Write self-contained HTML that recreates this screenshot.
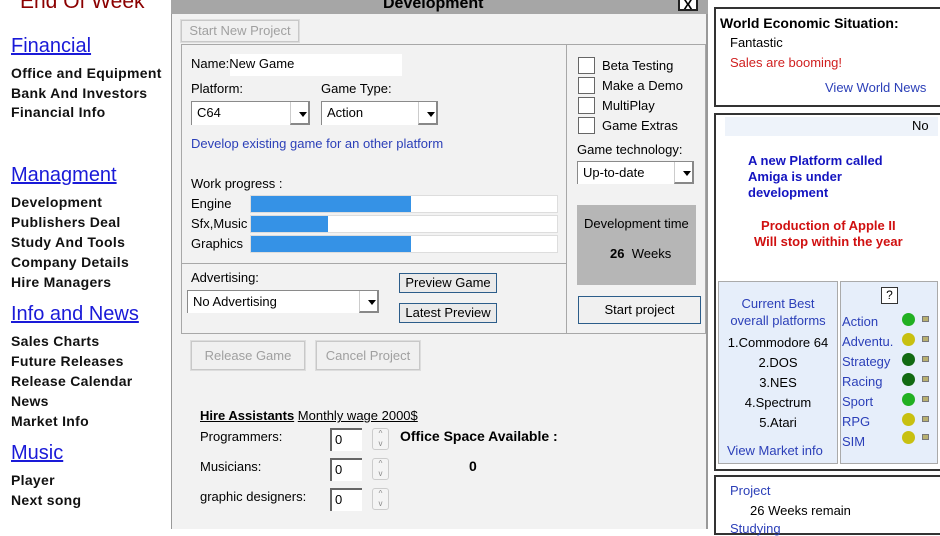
<!DOCTYPE html><html><head><style>
*{margin:0;padding:0;box-sizing:border-box}
body{width:940px;height:529px;overflow:hidden;background:#fff;font-family:"Liberation Sans",Arial,sans-serif;font-size:13px;position:relative;color:#000}
.a{position:absolute;white-space:nowrap}
.nav{font-weight:bold;font-size:14px;letter-spacing:0.3px;color:#111}
.h{color:#1a1ad8;text-decoration:underline;font-size:20px}
.box{position:absolute;border:1px solid #a0a0a0}
.btn{position:absolute;border:1px solid #707070;background:#eaeaea;text-align:center;font-size:13px}
.dis{border:1px solid #c8c8c8;color:#a0a0a0;background:#f0f0f0;box-shadow:0 0 0 1px #ddd}
.sel{position:absolute;background:#fff;border:1px solid #8a8a8a;border-right:none;border-bottom:none;padding:3px 5px;font-size:13px}
.sel:after{content:"";position:absolute;right:3px;top:50%;margin-top:-2px;border:4px solid transparent;border-top:5px solid #000}
.sel i{position:absolute;right:0;top:0;bottom:0;width:20px;border-left:1px solid #ccc;border-bottom:2px solid #888;border-right:2px solid #888}
.bar{position:absolute;left:250px;width:308px;height:18px;background:#fff;border:1px solid #ddd}
.bar b{display:block;height:100%;background:#3592e6}
.cb{position:absolute;left:578px;width:17px;height:17px;border:1px solid #666;background:#fff}
.led{position:absolute;width:13px;height:13px;border-radius:50%}
.sq{position:absolute;width:7px;height:6px;background:#b8b070;border:1px solid #777}
.spin{position:absolute;width:17px;height:22px;border:1px solid #ccc;border-radius:3px;background:#f4f4f4;font-size:8px;text-align:center;color:#888;line-height:10px}
.in{position:absolute;background:#fff;border-left:2px solid #666;border-top:2px solid #666;width:32px;height:23px;padding:2px 3px;font-size:13px}
</style></head><body>
<div class="a" style="left:20px;top:-10px;font-size:21px;color:#8b0000">End Of Week</div>
<div class="a h" style="left:11px;top:35px">Financial</div>
<div class="a nav" style="left:11px;top:65px">Office and Equipment</div>
<div class="a nav" style="left:11px;top:85px">Bank And Investors</div>
<div class="a nav" style="left:11px;top:104px">Financial Info</div>
<div class="a h" style="left:11px;top:164px">Managment</div>
<div class="a nav" style="left:11px;top:194px">Development</div>
<div class="a nav" style="left:11px;top:214px">Publishers Deal</div>
<div class="a nav" style="left:11px;top:234px">Study And Tools</div>
<div class="a nav" style="left:11px;top:254px">Company Details</div>
<div class="a nav" style="left:11px;top:274px">Hire Managers</div>
<div class="a h" style="left:11px;top:303px">Info and News</div>
<div class="a nav" style="left:11px;top:333px">Sales Charts</div>
<div class="a nav" style="left:11px;top:353px">Future Releases</div>
<div class="a nav" style="left:11px;top:373px">Release Calendar</div>
<div class="a nav" style="left:11px;top:393px">News</div>
<div class="a nav" style="left:11px;top:413px">Market Info</div>
<div class="a h" style="left:11px;top:442px">Music</div>
<div class="a nav" style="left:11px;top:472px">Player</div>
<div class="a nav" style="left:11px;top:492px">Next song</div>

<!-- dialog -->
<div class="a" style="left:171px;top:0;width:537px;height:529px;background:#f2f2f2;border-left:1px solid #999;border-right:2px solid #999"></div>
<div class="a" style="left:171px;top:0;width:537px;height:14px;background:#a6a6a6"></div>
<div class="a" style="left:383px;top:-5px;font-weight:bold;font-size:16px">Development</div>
<div class="a" style="left:678px;top:-2px;width:20px;height:13px;border:2px solid #222;background:#fff;font-weight:bold;font-size:13px;text-align:center;line-height:10px">X</div>
<div class="btn dis" style="left:181px;top:20px;width:118px;height:22px;line-height:20px">Start New Project</div>
<div class="box" style="left:181px;top:44px;width:525px;height:290px;border-color:#a8a8a8"></div>
<div class="a" style="left:566px;top:45px;width:1px;height:288px;background:#a8a8a8"></div>
<div class="a" style="left:182px;top:263px;width:384px;height:1px;background:#a8a8a8"></div>
<div class="a" style="left:230px;top:54px;width:172px;height:22px;background:#fff"></div>
<div class="a" style="left:191px;top:56px">Name:New Game</div>
<div class="a" style="left:191px;top:81px">Platform:</div>
<div class="a" style="left:321px;top:81px">Game Type:</div>
<div class="sel" style="left:191px;top:101px;width:119px;height:24px">C64<i></i></div>
<div class="sel" style="left:321px;top:101px;width:117px;height:24px">Action<i></i></div>
<div class="a" style="left:191px;top:136px;color:#2b3fb8">Develop existing game for an other platform</div>
<div class="a" style="left:191px;top:176px">Work progress :</div>
<div class="a" style="left:191px;top:196px">Engine</div>
<div class="a" style="left:191px;top:216px">Sfx,Music</div>
<div class="a" style="left:191px;top:236px">Graphics</div>
<div class="bar" style="top:195px"><b style="width:160px"></b></div>
<div class="bar" style="top:215px"><b style="width:77px"></b></div>
<div class="bar" style="top:235px"><b style="width:160px"></b></div>
<div class="a" style="left:191px;top:270px">Advertising:</div>
<div class="sel" style="left:187px;top:290px;width:192px;height:23px">No Advertising<i></i></div>
<div class="btn" style="left:399px;top:273px;width:98px;height:20px;line-height:18px;border-color:#2c5d8a">Preview Game</div>
<div class="btn" style="left:399px;top:303px;width:98px;height:20px;line-height:18px;border-color:#2c5d8a">Latest Preview</div>
<div class="cb" style="top:57px"></div><div class="a" style="left:602px;top:58px">Beta Testing</div>
<div class="cb" style="top:77px"></div><div class="a" style="left:602px;top:78px">Make a Demo</div>
<div class="cb" style="top:97px"></div><div class="a" style="left:602px;top:98px">MultiPlay</div>
<div class="cb" style="top:117px"></div><div class="a" style="left:602px;top:118px">Game Extras</div>
<div class="a" style="left:577px;top:142px">Game technology:</div>
<div class="sel" style="left:577px;top:161px;width:117px;height:23px">Up-to-date<i></i></div>
<div class="a" style="left:577px;top:205px;width:119px;height:80px;background:#b6b6b6"></div>
<div class="a" style="left:584px;top:216px">Development time</div>
<div class="a" style="left:610px;top:246px"><b>26</b>&nbsp; Weeks</div>
<div class="btn" style="left:578px;top:296px;width:123px;height:28px;line-height:26px;border-color:#2c5d8a;background:#f0f0f0">Start project</div>
<div class="btn dis" style="left:191px;top:341px;width:114px;height:29px;line-height:27px">Release Game</div>
<div class="btn dis" style="left:316px;top:341px;width:104px;height:29px;line-height:27px">Cancel Project</div>
<div class="a" style="left:200px;top:408px"><b style="text-decoration:underline">Hire Assistants</b> <span style="text-decoration:underline">Monthly wage 2000$</span></div>
<div class="a" style="left:200px;top:429px">Programmers:</div>
<div class="a" style="left:200px;top:459px">Musicians:</div>
<div class="a" style="left:200px;top:489px">graphic designers:</div>
<div class="in" style="left:330px;top:428px">0</div><div class="spin" style="left:372px;top:428px">^<br>v</div>
<div class="in" style="left:330px;top:458px">0</div><div class="spin" style="left:372px;top:458px">^<br>v</div>
<div class="in" style="left:330px;top:488px">0</div><div class="spin" style="left:372px;top:488px">^<br>v</div>
<div class="a" style="left:400px;top:428px;font-weight:bold;font-size:14px">Office Space Available :</div>
<div class="a" style="left:469px;top:458px;font-weight:bold;font-size:14px">0</div>

<!-- right -->
<div class="a" style="left:714px;top:7px;width:226px;height:100px;border:2px solid #333;border-right:none"></div>
<div class="a" style="left:720px;top:15px;font-weight:bold;font-size:14px">World Economic Situation:</div>
<div class="a" style="left:730px;top:35px">Fantastic</div>
<div class="a" style="left:730px;top:55px;color:#d02020">Sales are booming!</div>
<div class="a" style="left:825px;top:80px;color:#2b3fb8">View World News</div>
<div class="a" style="left:714px;top:113px;width:226px;height:358px;border:2px solid #333;border-right:none"></div>
<div class="a" style="left:725px;top:117px;width:213px;height:19px;background:#eef3fa"></div>
<div class="a" style="left:912px;top:118px">No</div>
<div class="a" style="left:748px;top:153px;font-weight:bold;color:#1414c0;line-height:16px">A new Platform called<br>Amiga is under<br>development</div>
<div class="a" style="left:754px;top:218px;font-weight:bold;color:#d01010;line-height:16px;text-align:center">Production of Apple II<br>Will stop within the year</div>
<div class="a" style="left:718px;top:281px;width:120px;height:183px;background:#e6eefa;border:1px solid #aaa"></div>
<div class="a" style="left:840px;top:281px;width:98px;height:183px;background:#e6eefa;border:1px solid #aaa"></div>
<div class="a" style="left:718px;top:295px;width:120px;text-align:center;color:#2b3fb8;line-height:17px">Current Best<br>overall platforms</div>
<div class="a" style="left:718px;top:333px;width:120px;text-align:center;line-height:20px">1.Commodore 64<br>2.DOS<br>3.NES<br>4.Spectrum<br>5.Atari</div>
<div class="a" style="left:727px;top:443px;color:#2b3fb8">View Market info</div>
<div class="a" style="left:881px;top:287px;width:17px;height:17px;border:1px solid #333;background:#fff;text-align:center;font-size:12px;line-height:15px">?</div>
<div class="a" style="left:842px;top:312px;color:#2b3fb8;line-height:20px">Action<br>Adventu.<br>Strategy<br>Racing<br>Sport<br>RPG<br>SIM</div>
<div class="led" style="left:902px;top:313px;background:#22b022"></div><div class="sq" style="left:922px;top:316px"></div>
<div class="led" style="left:902px;top:333px;background:#c8c010"></div><div class="sq" style="left:922px;top:336px"></div>
<div class="led" style="left:902px;top:353px;background:#126a12"></div><div class="sq" style="left:922px;top:356px"></div>
<div class="led" style="left:902px;top:373px;background:#126a12"></div><div class="sq" style="left:922px;top:376px"></div>
<div class="led" style="left:902px;top:393px;background:#22b022"></div><div class="sq" style="left:922px;top:396px"></div>
<div class="led" style="left:902px;top:413px;background:#c8c010"></div><div class="sq" style="left:922px;top:416px"></div>
<div class="led" style="left:902px;top:431px;background:#c8c010"></div><div class="sq" style="left:922px;top:434px"></div>
<div class="a" style="left:714px;top:475px;width:226px;height:60px;border:2px solid #333;border-right:none"></div>
<div class="a" style="left:730px;top:483px;color:#2b3fb8">Project</div>
<div class="a" style="left:750px;top:503px">26 Weeks remain</div>
<div class="a" style="left:730px;top:521px;color:#2b3fb8">Studying</div>
</body></html>
